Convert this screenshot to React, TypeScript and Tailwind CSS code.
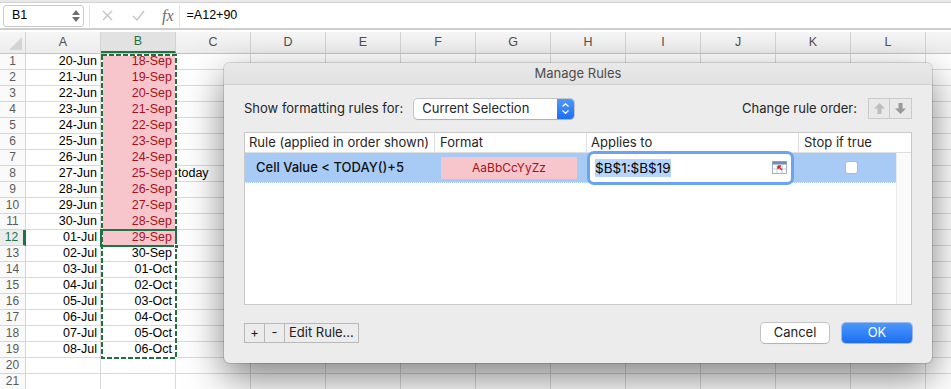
import React from 'react'

const colA = [
  '20-Jun', '21-Jun', '22-Jun', '23-Jun', '24-Jun', '25-Jun', '26-Jun', '27-Jun', '28-Jun', '29-Jun',
  '30-Jun', '01-Jul', '02-Jul', '03-Jul', '04-Jul', '05-Jul', '06-Jul', '07-Jul', '08-Jul',
]
const colB = [
  '18-Sep', '19-Sep', '20-Sep', '21-Sep', '22-Sep', '23-Sep', '24-Sep', '25-Sep', '26-Sep', '27-Sep',
  '28-Sep', '29-Sep', '30-Sep', '01-Oct', '02-Oct', '03-Oct', '04-Oct', '05-Oct', '06-Oct',
]
// last column runs off the window, its letter is not visible
const letters = ['A', 'B', 'C', 'D', 'E', 'F', 'G', 'H', 'I', 'J', 'K', 'L', '']

function FormulaBar() {
  return (
    <div className="h-[32px] bg-white">
      <div className="h-[3px] border-b border-[#d2d2d2] bg-[#e9e9e9]" />
      <div className="flex h-[27px] items-center border-b-2 border-[#cdcdcd]">
        {/* name box */}
        <div className="ml-[3px] flex h-[22px] w-[81px] items-center rounded-[3px] border border-[#cacaca] bg-white">
          <span className="pl-[8px] text-[12.5px] text-black">B1</span>
          <div className="ml-auto mr-[3px] flex flex-col items-center gap-[2px]">
            <svg width="8" height="5" viewBox="0 0 8 5"><polygon points="4,0 8,5 0,5" fill="#6f6f6f" /></svg>
            <svg width="8" height="5" viewBox="0 0 8 5"><polygon points="0,0 8,0 4,5" fill="#6f6f6f" /></svg>
          </div>
        </div>
        <div className="ml-[5px] h-[22px] w-px bg-[#e4e4e4]" />
        {/* cancel / enter / fx */}
        <svg className="ml-[12px]" width="11" height="11" viewBox="0 0 11 11">
          <path d="M1 1 L10 10 M10 1 L1 10" stroke="#c4c4c4" strokeWidth="1.4" />
        </svg>
        <svg className="ml-[19px]" width="13" height="11" viewBox="0 0 13 11">
          <path d="M1 6 L5 10 L12 1" stroke="#c4c4c4" strokeWidth="1.4" fill="none" />
        </svg>
        <span className="ml-[17px] font-['Liberation_Serif',serif] text-[16px] italic leading-none text-[#6a6a6a]">fx</span>
        <div className="ml-[5px] h-[22px] w-px bg-[#e4e4e4]" />
        <span className="ml-[7px] text-[12.5px] text-black">=A12+90</span>
      </div>
    </div>
  )
}

function Sheet() {
  return (
    <div>
      {/* column headers */}
      <div className="flex h-[22px] border-b border-[#c4c4c4] bg-gradient-to-b from-[#f6f6f6] to-[#ececec]">
        <div className="relative w-[26px] shrink-0 border-r border-[#d3d3d3]">
          <svg className="absolute bottom-[3px] right-[3px]" width="13" height="13" viewBox="0 0 13 13">
            <polygon points="13,0 13,13 0,13" fill="#d4d4d4" />
          </svg>
        </div>
        {letters.map((l, idx) => (
          <div
            key={idx}
            className={
              l === 'B'
                ? 'flex w-[75px] shrink-0 items-center justify-center border-r border-b-2 border-r-[#d3d3d3] border-b-[#217346] bg-[#e2e2e2] text-[12.5px] text-[#217346]'
                : 'flex w-[75px] shrink-0 items-center justify-center border-r border-[#d3d3d3] text-[12.5px] text-[#4f4f4f]'
            }
          >
            {l}
          </div>
        ))}
      </div>

      {/* rows */}
      {Array.from({ length: 21 }).map((_, i) => {
        const pink = i < 12
        const active = i === 11
        return (
          <div key={i} className="flex h-[16px] text-[12.5px] leading-[15px]">
            <div
              className={
                active
                  ? 'w-[26px] shrink-0 border-r-[3px] border-b border-r-[#217346] border-b-[#d6d6d6] bg-[#ececec] text-center text-[12px] text-[#217346]'
                  : 'w-[26px] shrink-0 border-r border-b border-[#d6d6d6] bg-[#fafafa] text-center text-[12px] text-[#5a5a5a]'
              }
            >
              {i + 1}
            </div>
            <div className="w-[75px] shrink-0 border-r border-b border-[#dadada] pr-[3px] text-right text-black">
              {colA[i] ?? ''}
            </div>
            <div
              className={
                pink
                  ? 'w-[75px] shrink-0 border-r border-b border-[#f6c6cc] bg-[#f6c6cc] pr-[3px] text-right text-[#a5121b]'
                  : 'w-[75px] shrink-0 border-r border-b border-[#dadada] pr-[3px] text-right text-black'
              }
            >
              {colB[i] ?? ''}
            </div>
            {letters.slice(2).map((l, idx) => (
              <div key={idx} className="w-[75px] shrink-0 border-r border-b border-[#dadada] pl-[2px] text-black">
                {l === 'C' && i === 7 ? 'today' : ''}
              </div>
            ))}
          </div>
        )
      })}
    </div>
  )
}

function RangeIcon() {
  return (
    <svg width="15" height="13" viewBox="0 0 15 13">
      <rect x="0.5" y="0.5" width="14" height="12" fill="#fff" stroke="#9fb3c8" />
      <rect x="0.5" y="0.5" width="14" height="3" fill="#6f8fb3" />
      <path d="M5 4 V12 M10 4 V12 M1 8 H14" stroke="#c3d0de" />
      <path d="M6 5 L10 9 M6 5 H9 M6 5 V8" stroke="#d2232a" strokeWidth="1.4" fill="none" />
    </svg>
  )
}

function ManageRules() {
  return (
    <div className="absolute left-[224px] top-[63px] h-[300px] w-[708px] overflow-hidden rounded-[6px] bg-[#ececec] font-['Inter',sans-serif] text-[13px] text-[#262626] shadow-[0_14px_38px_rgba(0,0,0,0.5),0_0_0_1px_rgba(0,0,0,0.13)]">
      {/* title bar */}
      <div className="flex h-[22px] items-center justify-center border-b border-[#d1d1d1] bg-gradient-to-b from-[#e9e9e9] to-[#e1e1e1] text-[13px] text-[#4d4d4d]">
        Manage Rules
      </div>

      {/* toolbar */}
      <div className="mt-[13px] flex h-[21px] items-center px-[20px]">
        <span>Show formatting rules for:</span>
        <div className="ml-[11px] flex h-[20px] w-[160px] items-center rounded-[4px] bg-white shadow-[0_0_0_1px_rgba(0,0,0,0.16),0_1px_1px_rgba(0,0,0,0.12)]">
          <span className="pl-[8px]">Current Selection</span>
          <div className="ml-auto flex h-[20px] w-[17px] flex-col items-center justify-center gap-[3px] rounded-r-[4px] bg-gradient-to-b from-[#4d98fa] to-[#1c6ef3]">
            <svg width="7" height="4" viewBox="0 0 7 4"><path d="M0.5 3.5 L3.5 0.7 L6.5 3.5" stroke="#fff" strokeWidth="1.2" fill="none" /></svg>
            <svg width="7" height="4" viewBox="0 0 7 4"><path d="M0.5 0.5 L3.5 3.3 L6.5 0.5" stroke="#fff" strokeWidth="1.2" fill="none" /></svg>
          </div>
        </div>
        <span className="ml-auto">Change rule order:</span>
        <div className="ml-[11px] flex h-[21px] border border-[#cbcbcb]">
          <div className="flex w-[21px] items-center justify-center border-r border-[#cbcbcb] bg-[#e9e9e9]">
            <svg width="11" height="11" viewBox="0 0 11 11"><polygon points="5.5,0 11,5.5 7.5,5.5 7.5,11 3.5,11 3.5,5.5 0,5.5" fill="#bdbdbd" /></svg>
          </div>
          <div className="flex w-[21px] items-center justify-center bg-[#e9e9e9]">
            <svg width="11" height="11" viewBox="0 0 11 11"><polygon points="5.5,11 11,5.5 7.5,5.5 7.5,0 3.5,0 3.5,5.5 0,5.5" fill="#9a9a9a" /></svg>
          </div>
        </div>
      </div>

      {/* rules table */}
      <div className="mx-[20px] mt-[13px] flex h-[173px] flex-col border border-[#c9c9c9] bg-white">
        <div className="flex h-[20px] shrink-0 items-center border-b border-[#dedede] text-[13px] text-[#262626]">
          <div className="w-[190px] border-r border-[#dedede] pl-[4px]">Rule (applied in order shown)</div>
          <div className="w-[152px] border-r border-[#dedede] pl-[5px]">Format</div>
          <div className="w-[212px] border-r border-[#dedede] pl-[4px]">Applies to</div>
          <div className="pl-[5px]">Stop if true</div>
        </div>
        <div className="flex flex-1">
          <div className="w-[651px]">
            <div className="flex h-[30px] items-center border-b border-dotted border-[#e9f1fc] bg-[#a8cbf6]">
              <div className="w-[190px] pl-[11px] font-medium text-[#111]">Cell Value &lt; TODAY()+5</div>
              <div className="flex w-[152px] pl-[6px]">
                <div className="flex h-[22px] w-[136px] items-center justify-center bg-[#f6c6cc] text-[12px] text-[#a5121b]">
                  AaBbCcYyZz
                </div>
              </div>
              <div className="flex w-[212px] pl-[3px]">
                <div className="flex h-[28px] w-[201px] items-center rounded-[4px] bg-white shadow-[0_0_0_3px_#69a3f5]">
                  <span className="ml-[5px] bg-[#b4d5fe] text-[13.5px] leading-[18px] text-black">$B$1:$B$19</span>
                  <div className="ml-auto mr-[4px]">
                    <RangeIcon />
                  </div>
                </div>
              </div>
              <div className="flex flex-1 justify-center pl-[8px]">
                <div className="h-[13px] w-[13px] rounded-[3px] border border-[#b8b8b8] bg-white" />
              </div>
            </div>
          </div>
          <div className="flex-1 border-l border-[#ececec] bg-[#fafafa]" />
        </div>
      </div>

      {/* bottom buttons */}
      <div className="mt-[18px] flex items-center px-[20px]">
        <div className="flex h-[20px] border border-[#b9b9b9] text-[13px] text-[#222]">
          <div className="flex w-[20px] items-center justify-center border-r border-[#b9b9b9]">+</div>
          <div className="flex w-[20px] items-center justify-center border-r border-[#b9b9b9]">-</div>
          <div className="flex items-center px-[4px]">Edit Rule...</div>
        </div>
        <button className="ml-auto flex h-[20px] w-[68px] items-center justify-center rounded-[4px] bg-white text-[13px] text-[#222] shadow-[0_0_0_1px_rgba(0,0,0,0.17),0_1px_1px_rgba(0,0,0,0.1)]">
          Cancel
        </button>
        <button className="ml-[13px] flex h-[20px] w-[70px] items-center justify-center rounded-[4px] bg-gradient-to-b from-[#4c97fa] to-[#1a6ef3] text-[13px] text-white shadow-[0_0_0_1px_rgba(20,90,220,0.35)]">
          OK
        </button>
      </div>
    </div>
  )
}

export default function App() {
  return (
    <div className="relative h-[389px] w-[951px] overflow-hidden bg-white font-['Liberation_Sans',Arial,sans-serif]">
      <FormulaBar />
      <Sheet />

      {/* copy marquee around B1:B19 */}
      <svg className="pointer-events-none absolute left-[101px] top-[54px]" width="76" height="305" viewBox="0 0 76 305">
        <rect x="1" y="1" width="74" height="303" fill="none" stroke="#ffffff" strokeWidth="2" />
        <rect x="1" y="1" width="74" height="303" fill="none" stroke="#23703f" strokeWidth="2" strokeDasharray="5 2" />
      </svg>

      {/* active cell B12 */}
      <div className="pointer-events-none absolute left-[100px] top-[229px] h-[18px] w-[77px] border-2 border-[#217346]" />
      <div className="pointer-events-none absolute left-[174px] top-[244px] h-[5px] w-[5px] border border-white bg-[#217346]" />

      <ManageRules />
    </div>
  )
}
